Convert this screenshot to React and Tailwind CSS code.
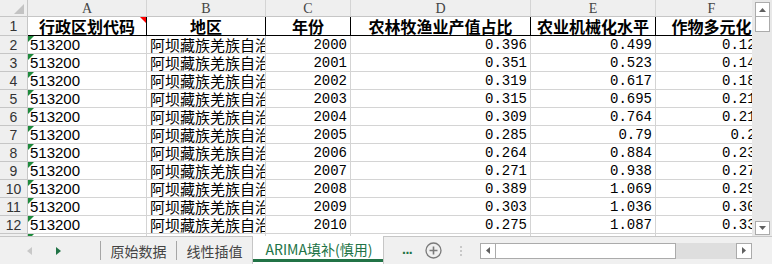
import React from "react";

const rows = [
  [2, "2000", "0.396", "0.499", "0.125"],
  [3, "2001", "0.351", "0.523", "0.147"],
  [4, "2002", "0.319", "0.617", "0.183"],
  [5, "2003", "0.315", "0.695", "0.214"],
  [6, "2004", "0.309", "0.764", "0.218"],
  [7, "2005", "0.285", "0.79", "0.25"],
  [8, "2006", "0.264", "0.884", "0.232"],
  [9, "2007", "0.271", "0.938", "0.271"],
  [10, "2008", "0.389", "1.069", "0.293"],
  [11, "2009", "0.303", "1.036", "0.305"],
  [12, "2010", "0.275", "1.087", "0.331"],
  [13, "2011", "0.268", "1.102", "0.342"],
];

const hdrCell =
  "shrink-0 h-full flex items-center justify-center border-r border-[#d4d4d4] bg-[#efefef] text-[#444] font-['Liberation_Serif',serif] text-[14px]";
const numCell =
  "shrink-0 h-full flex items-center justify-end pr-[3px] pt-[2px] border-r border-b border-[#d4d4d4] overflow-hidden whitespace-nowrap font-['Liberation_Mono',monospace] text-[14px] text-black";
const titleCell =
  "shrink-0 h-full flex items-center justify-center border-r border-b border-black overflow-hidden whitespace-nowrap font-['Noto_Sans_CJK_SC',sans-serif] font-bold text-[16px] text-black";

function GreenTri() {
  return (
    <div className="absolute left-0 top-0 w-0 h-0 border-t-[6px] border-t-[#1e8a3c] border-r-[6px] border-r-transparent" />
  );
}

export default function App() {
  return (
    <div className="w-[772px] h-[264px] flex flex-col overflow-hidden bg-white select-none">
      <div className="flex h-[236px] shrink-0">
        {/* grid */}
        <div className="w-[752px] h-[236px] overflow-hidden shrink-0">
          {/* column letters */}
          <div className="flex h-[17px] border-b border-[#c6c6c6] w-[768px]">
            <div className="w-[28px] shrink-0 h-full bg-[#efefef] border-r border-[#c6c6c6] relative">
              <div className="absolute right-[3px] bottom-[2px] w-0 h-0 border-b-[10px] border-b-[#c3c3c3] border-l-[10px] border-l-transparent" />
            </div>
            <div className={`${hdrCell} w-[119px]`}>A</div>
            <div className={`${hdrCell} w-[119px]`}>B</div>
            <div className={`${hdrCell} w-[85px]`}>C</div>
            <div className={`${hdrCell} w-[180px]`}>D</div>
            <div className={`${hdrCell} w-[125px]`}>E</div>
            <div className={`${hdrCell} w-[112px]`}>F</div>
          </div>
          {/* row 1 */}
          <div className="flex h-[19px] w-[768px]">
            <div className="w-[28px] shrink-0 h-full flex items-center justify-center pt-[1px] bg-[#efefef] border-r border-b border-[#c6c6c6] text-[#333] font-['Liberation_Sans',sans-serif] text-[14px]">
              1
            </div>
            <div className={`${titleCell} w-[119px] relative`}>
              行政区划代码
              <div className="absolute right-0 top-0 w-0 h-0 border-t-[6px] border-t-[#ff0000] border-l-[6px] border-l-transparent" />
            </div>
            <div className={`${titleCell} w-[119px]`}>地区</div>
            <div className={`${titleCell} w-[85px]`}>年份</div>
            <div className={`${titleCell} w-[180px]`}>农林牧渔业产值占比</div>
            <div className={`${titleCell} w-[125px]`}>农业机械化水平</div>
            <div className={`${titleCell} w-[112px]`}>作物多元化</div>
          </div>
          {rows.map((r) => (
            <div key={r[0]} className="flex h-[18px] w-[768px]">
              <div className="w-[28px] shrink-0 h-full flex items-center justify-center pt-[2px] bg-[#efefef] border-r border-b border-[#c6c6c6] text-[#333] font-['Liberation_Sans',sans-serif] text-[14px]">
                {r[0]}
              </div>
              <div className="w-[119px] shrink-0 h-full relative flex items-center pl-[2px] pt-[2px] border-r border-b border-[#d4d4d4] font-['Liberation_Sans',sans-serif] text-[15px] text-black">
                <GreenTri />
                513200
              </div>
              <div className="w-[119px] shrink-0 h-full flex items-center pl-[3px] pt-[1px] border-r border-b border-[#d4d4d4] overflow-hidden whitespace-nowrap font-['Noto_Sans_CJK_SC',sans-serif] text-[15px] text-black">
                阿坝藏族羌族自治州
              </div>
              <div className={`${numCell} w-[85px]`}>{r[1]}</div>
              <div className={`${numCell} w-[180px]`}>{r[2]}</div>
              <div className={`${numCell} w-[125px]`}>{r[3]}</div>
              <div className={`${numCell} w-[112px]`}>{r[4]}</div>
            </div>
          ))}
        </div>
        {/* vertical scrollbar */}
        <div className="w-[20px] h-[236px] bg-[#e8e8e8] flex flex-col items-center pt-[2px] pb-[1px]">
          <div className="w-[15px] h-[15px] bg-white border border-[#ababab] flex items-center justify-center">
            <svg width="7" height="4" viewBox="0 0 7 4"><path d="M0 4 L3.5 0 L7 4 Z" fill="#606060" /></svg>
          </div>
          <div className="w-[15px] h-[16px] bg-white border border-[#ababab] -mt-px" />
          <div className="flex-1" />
          <div className="w-[15px] h-[14px] bg-white border border-[#ababab] flex items-center justify-center">
            <svg width="7" height="4" viewBox="0 0 7 4"><path d="M0 0 L3.5 4 L7 0 Z" fill="#606060" /></svg>
          </div>
        </div>
      </div>
      {/* tab bar */}
      <div className="flex h-[28px] shrink-0 bg-[#f0f0f0] border-t border-[#c6c6c6] items-stretch">
        <div className="w-[100px] shrink-0 flex items-center pl-[27px] gap-[24px]">
          <svg width="5" height="8" viewBox="0 0 5 8"><path d="M5 0 L0 4 L5 8 Z" fill="#c8c8c8" /></svg>
          <svg width="5" height="8" viewBox="0 0 5 8"><path d="M0 0 L5 4 L0 8 Z" fill="#217346" /></svg>
        </div>
        <div className="w-px shrink-0 my-[4px] bg-[#a6a6a6]" />
        <div className="w-[75px] shrink-0 flex items-center justify-center text-[14px] leading-none text-[#444] font-['Noto_Sans_CJK_SC',sans-serif]">
          原始数据
        </div>
        <div className="w-px shrink-0 my-[4px] bg-[#a6a6a6]" />
        <div className="w-[75px] shrink-0 flex items-center justify-center text-[14px] leading-none text-[#444] font-['Noto_Sans_CJK_SC',sans-serif]">
          线性插值
        </div>
        <div className="w-[132px] shrink-0 -mt-px bg-white border-x border-[#c6c6c6] flex flex-col">
          <div className="flex-1 flex items-center justify-center pl-[2px] pt-[2px] text-[14px] leading-none text-[#217346] font-['Noto_Sans_CJK_SC',sans-serif]">
            ARIMA填补(慎用)
          </div>
          <div className="h-[3px] bg-[#217346] mb-[2px]" />
        </div>
        <div className="w-[96px] shrink-0 flex items-center">
          <span className="ml-[18px] text-[14px] font-bold text-[#217346] leading-none font-['Liberation_Sans',sans-serif] tracking-[-0.5px] pb-[4px]">...</span>
          <svg className="ml-[13px]" width="17" height="17" viewBox="0 0 17 17">
            <circle cx="8.5" cy="8.5" r="7.5" fill="none" stroke="#7a7a7a" strokeWidth="1.3" />
            <path d="M8.5 4.5 V12.5 M4.5 8.5 H12.5" stroke="#7a7a7a" strokeWidth="1.6" />
          </svg>
          <div className="ml-[18px] flex flex-col gap-[2px]">
            <div className="w-[2px] h-[2px] bg-[#c8c8c8]" />
            <div className="w-[2px] h-[2px] bg-[#c8c8c8]" />
            <div className="w-[2px] h-[2px] bg-[#c8c8c8]" />
          </div>
        </div>
        <div className="w-[272px] shrink-0 flex items-center">
          <div className="flex w-full h-[16px] bg-[#dedede]">
            <div className="w-[16px] h-full bg-white border border-[#ababab] flex items-center justify-center">
              <svg width="4" height="7" viewBox="0 0 4 7"><path d="M4 0 L0 3.5 L4 7 Z" fill="#606060" /></svg>
            </div>
            <div className="w-[181px] h-full bg-white border border-[#ababab] -ml-px" />
            <div className="flex-1" />
            <div className="w-[16px] h-full bg-white border border-[#ababab] flex items-center justify-center">
              <svg width="4" height="7" viewBox="0 0 4 7"><path d="M0 0 L4 3.5 L0 7 Z" fill="#606060" /></svg>
            </div>
          </div>
        </div>
        <div className="flex-1" />
      </div>
    </div>
  );
}
